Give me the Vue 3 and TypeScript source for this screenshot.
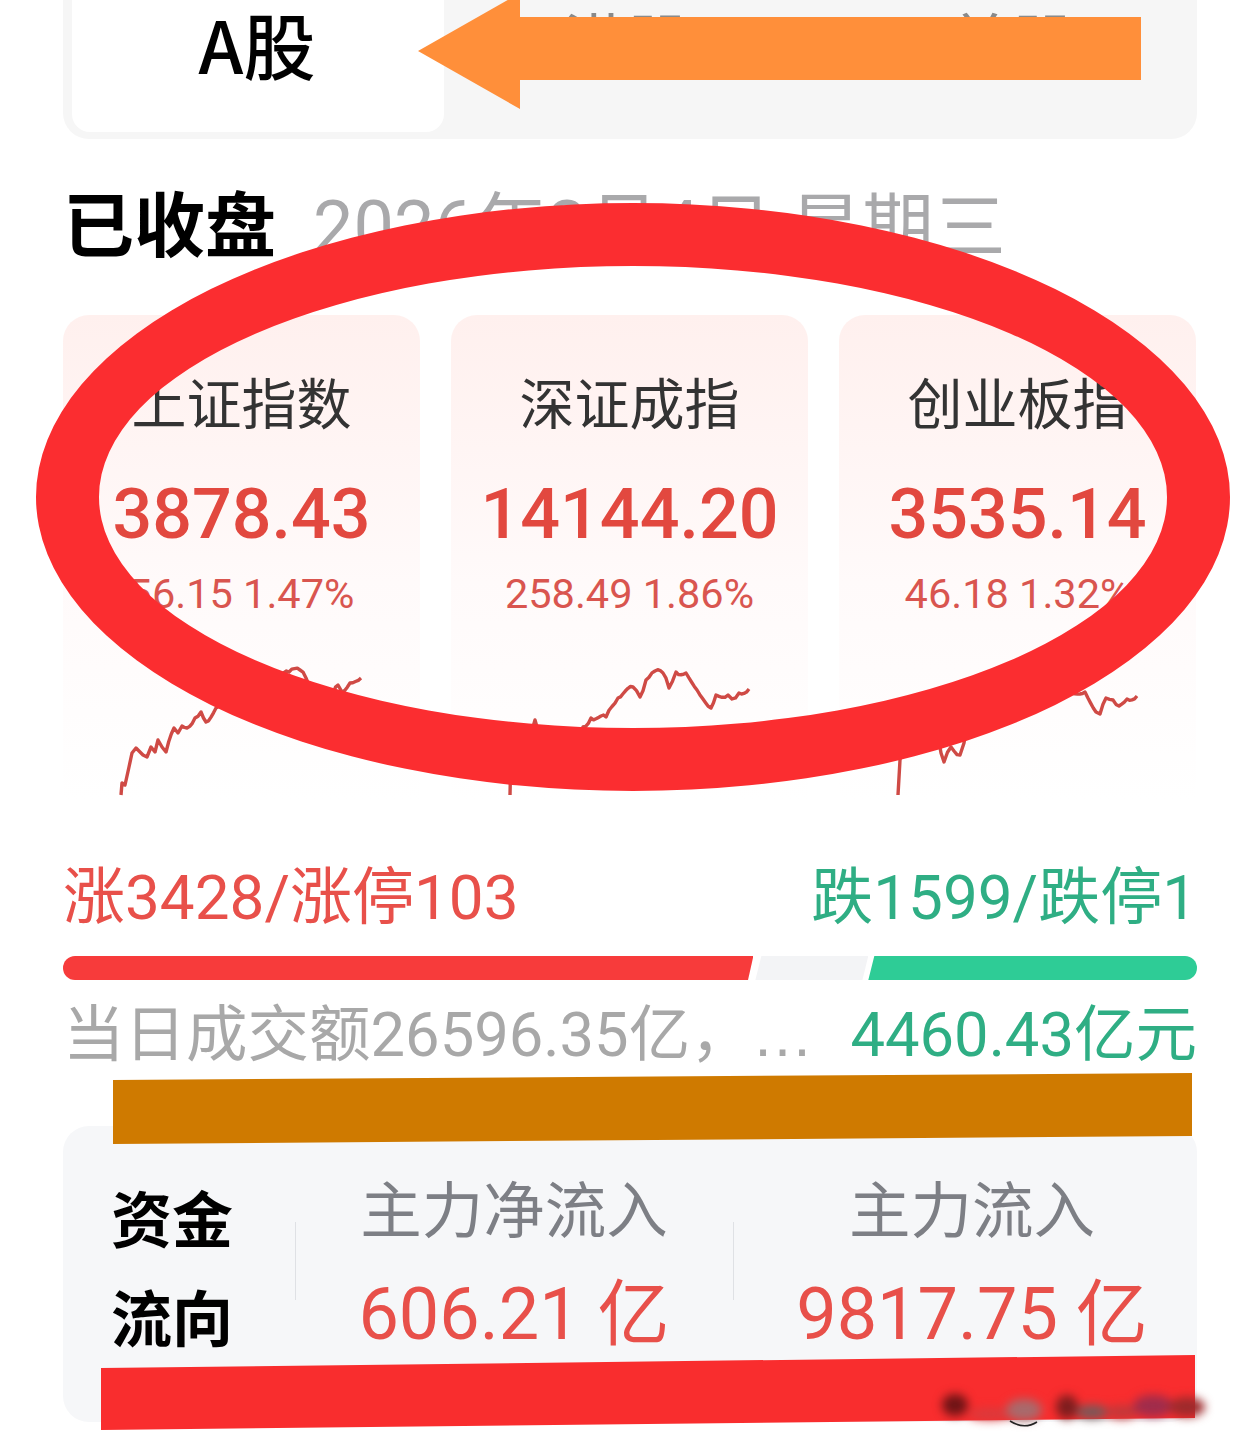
<script setup lang="ts">
type Point = [number, number]

// wobble between anchors so the intraday lines look jagged
function jagged (points: Point[]) {
  const out: string[] = []
  points.forEach((p, i) => {
    const next = points[i + 1]
    out.push(`${p[0]},${p[1]}`)
    if (!next) return
    const steps = Math.max(1, Math.floor((next[0] - p[0]) / 2.5))
    for (let s = 1; s < steps; s++) {
      const x = p[0] + (next[0] - p[0]) * s / steps
      const y = p[1] + (next[1] - p[1]) * s / steps
      out.push(`${x.toFixed(1)},${(y + Math.sin(x * 2.3) * 2.4).toFixed(1)}`)
    }
  })
  return out.join(' ')
}

const cards = [
  {
    name: '上证指数',
    value: '3878.43',
    change: '56.15 1.47%',
    line: jagged([[58, 135], [59, 123], [62, 125], [66, 107], [69, 93], [73, 88], [80, 95], [84, 97], [88, 87], [92, 92], [95, 80], [99, 87], [103, 92], [111, 68], [115, 73], [119, 66], [124, 68], [132, 58], [138, 52], [143, 62], [153, 48], [190, 30], [226, 12], [237, 10], [243, 18], [248, 34], [270, 34], [275, 25], [279, 32], [287, 23], [298, 18]])
  },
  {
    name: '深证成指',
    value: '14144.20',
    change: '258.49 1.86%',
    line: jagged([[59, 135], [60, 90], [80, 74], [84, 60], [88, 74], [128, 74], [132, 67], [140, 58], [155, 57], [167, 38], [182, 27], [189, 37], [195, 20], [204, 11], [212, 13], [218, 28], [225, 12], [235, 13], [246, 30], [260, 48], [265, 35], [277, 35], [281, 39], [288, 33], [298, 29]])
  },
  {
    name: '创业板指',
    value: '3535.14',
    change: '46.18 1.32%',
    line: jagged([[59, 135], [61, 100], [66, 70], [98, 70], [102, 93], [105, 102], [112, 87], [121, 95], [125, 83], [130, 50], [190, 30], [246, 32], [257, 52], [261, 54], [267, 38], [274, 40], [280, 46], [288, 39], [298, 36]])
  }
]

const blurs = [
  { cx: 955, cy: 1405, rx: 13, ry: 11, fill: '#6f1416' },
  { cx: 990, cy: 1414, rx: 22, ry: 6, fill: '#d93a3c' },
  { cx: 1024, cy: 1410, rx: 18, ry: 11, fill: '#a86a6c' },
  { cx: 1067, cy: 1407, rx: 11, ry: 12, fill: '#7e1d1e' },
  { cx: 1092, cy: 1412, rx: 16, ry: 7, fill: '#75595a' },
  { cx: 1122, cy: 1412, rx: 16, ry: 7, fill: '#c2383a' },
  { cx: 1153, cy: 1406, rx: 20, ry: 11, fill: '#a02c4b' },
  { cx: 1187, cy: 1407, rx: 18, ry: 10, fill: '#9e2a2c' }
]
</script>

<template>
  <div class="page">
    <div class="tabs">
      <div class="tab active">A股</div>
      <div class="tab hk">港股</div>
      <div class="tab us">美股</div>
    </div>

    <div class="heading">
      <strong>已收盘</strong>
      <span>2026年2月4日 星期三</span>
    </div>

    <div class="cards">
      <div v-for="card in cards" :key="card.name" class="card">
        <div class="name">{{ card.name }}</div>
        <div class="value">{{ card.value }}</div>
        <div class="change">{{ card.change }}</div>
        <svg class="chart" viewBox="0 0 357 140" width="357" height="140">
          <polyline :points="card.line" fill="none" stroke="#cf4a45" stroke-width="3.4" stroke-linejoin="round" />
        </svg>
      </div>
    </div>

    <div class="stats">
      <span class="up">涨3428/涨停103</span>
      <span class="down">跌1599/跌停1</span>
    </div>

    <div class="bar">
      <div class="bar-up"></div>
      <div class="bar-flat"></div>
      <div class="bar-down"></div>
    </div>

    <div class="turnover">
      <span class="turnover-text">当日成交额26596.35亿，<i class="dots">…</i></span>
      <span class="down">4460.43亿元</span>
    </div>

    <div class="flow">
      <div class="flow-label">资金<br>流向</div>
      <div class="metric">
        <div class="metric-title">主力净流入</div>
        <div class="metric-value">606.21 亿</div>
      </div>
      <div class="metric wide">
        <div class="metric-title">主力流入</div>
        <div class="metric-value">9817.75 亿</div>
      </div>
    </div>

    <!-- marks drawn over the screenshot -->
    <svg class="marks" viewBox="0 0 1260 1454" width="1260" height="1454">
      <polygon points="418,51 520,-7 520,17 1141,17 1141,80 520,80 520,109" fill="#ff8f3a" />
      <path
        fill="#fb2d30"
        fill-rule="evenodd"
        d="M36 497a597 294 0 1 0 1194 0a597 294 0 1 0 -1194 0zM99 497a534 231 0 1 1 1068 0a534 231 0 1 1 -1068 0z"
      />
      <polygon points="113,1080 1192,1073 1192,1136 113,1144" fill="#cf7a00" />
      <polygon points="101,1368 1195,1355 1195,1418 101,1430" fill="#f92d2e" />
      <g class="smudge">
        <ellipse v-for="b in blurs" :key="b.cx" :cx="b.cx" :cy="b.cy" :rx="b.rx" :ry="b.ry" :fill="b.fill" />
      </g>
      <path d="M1010 1421q14 9 27 1" fill="none" stroke="#222" stroke-width="1.5" />
    </svg>
  </div>
</template>

<style scoped>
.page {
  position: relative;
  width: 1260px;
  height: 1454px;
  box-sizing: border-box;
  padding: 0 63px;
  overflow: hidden;
  background: #fff;
  font-family: Roboto, "Noto Sans CJK SC", sans-serif;
}

.tabs {
  display: flex;
  height: 139px;
  box-sizing: border-box;
  padding: 0 9px 7px;
  background: #f6f6f6;
  border-radius: 0 0 26px 26px;
}

.tab {
  font-size: 64px;
  line-height: 92px;
  color: #8a8a8a;
}

.tab.active {
  width: 372px;
  padding-right: 2px;
  box-sizing: border-box;
  background: #fff;
  border-radius: 0 0 18px 18px;
  color: #000;
  font-family: "Noto Sans CJK SC", sans-serif;
  font-size: 72px;
  font-weight: 500;
  line-height: 86px;
  text-align: center;
}

.hk {
  margin-left: 119px;
}

.us {
  margin-left: 257px;
}

.heading {
  display: flex;
  align-items: center;
  gap: 37px;
  height: 72px;
  margin-top: 45px;
}

.heading strong {
  font-size: 71px;
  font-weight: 700;
  color: #000;
}

.heading span {
  font-size: 72px;
  color: #a9a9ab;
}

.cards {
  display: flex;
  gap: 31px;
  margin-top: 59px;
}

.card {
  width: 357px;
  height: 485px;
  box-sizing: border-box;
  padding-top: 60px;
  border-radius: 26px 26px 0 0;
  background: linear-gradient(#fff0ee, #fffafa 55%, #fff);
  text-align: center;
}

.name {
  height: 60px;
  font-size: 55px;
  line-height: 60px;
  color: #333;
}

.value {
  height: 80px;
  margin-top: 39px;
  font-size: 70px;
  font-weight: 500;
  line-height: 80px;
  color: #e2483f;
}

.change {
  height: 44px;
  margin-top: 18px;
  font-size: 41.5px;
  line-height: 44px;
  color: #d9554f;
}

.chart {
  display: block;
  margin-top: 44px;
}

.stats,
.turnover {
  display: flex;
  justify-content: space-between;
  align-items: center;
  height: 70px;
  line-height: 70px;
  white-space: nowrap;
}

.stats {
  margin-top: 63px;
  font-size: 62px;
}

.up {
  color: #e8504a;
}

.down {
  color: #2fae84;
}

.bar {
  display: flex;
  justify-content: space-between;
  height: 24px;
  margin-top: 23px;
}

.bar-up {
  width: 691px;
  background: #f73b3b;
  border-radius: 12px 0 0 12px;
  clip-path: polygon(0 0, 100% 0, 685px 100%, 0 100%);
}

.bar-flat {
  width: 113px;
  margin-left: 2px;
  background: #f3f4f6;
  clip-path: polygon(6px 0, 100% 0, 107px 100%, 0 100%);
}

.bar-down {
  width: 329px;
  background: #2ecc96;
  border-radius: 0 12px 12px 0;
  clip-path: polygon(6px 0, 100% 0, 100% 100%, 0 100%);
}

.turnover {
  margin-top: 20px;
  font-size: 61.5px;
}

.turnover-text {
  color: #a8a8a8;
}

.dots {
  font-family: "Liberation Sans", sans-serif;
  font-style: normal;
}

.flow {
  display: flex;
  height: 296px;
  margin-top: 56px;
  border-radius: 26px;
  background: #f6f7f9;
}

.flow-label {
  width: 232px;
  box-sizing: border-box;
  padding: 47px 0 0 48px;
  font-size: 61px;
  font-weight: 700;
  line-height: 99px;
  color: #000;
}

.metric {
  position: relative;
  width: 438px;
  box-sizing: border-box;
  padding-top: 51px;
  text-align: center;
  white-space: nowrap;
}

.metric::before {
  content: "";
  position: absolute;
  top: 96px;
  left: 0;
  width: 1px;
  height: 78px;
  background: #dfe1e5;
}

.metric.wide {
  width: 464px;
  padding-left: 14px;
}

.metric-title {
  height: 70px;
  font-size: 61.5px;
  line-height: 70px;
  color: #7d7f85;
}

.metric-value {
  height: 70px;
  margin-top: 33px;
  font-size: 72px;
  line-height: 70px;
  color: #e8504a;
}

.marks {
  position: absolute;
  top: 0;
  left: 0;
  pointer-events: none;
}

.smudge {
  filter: blur(5px);
}
</style>
